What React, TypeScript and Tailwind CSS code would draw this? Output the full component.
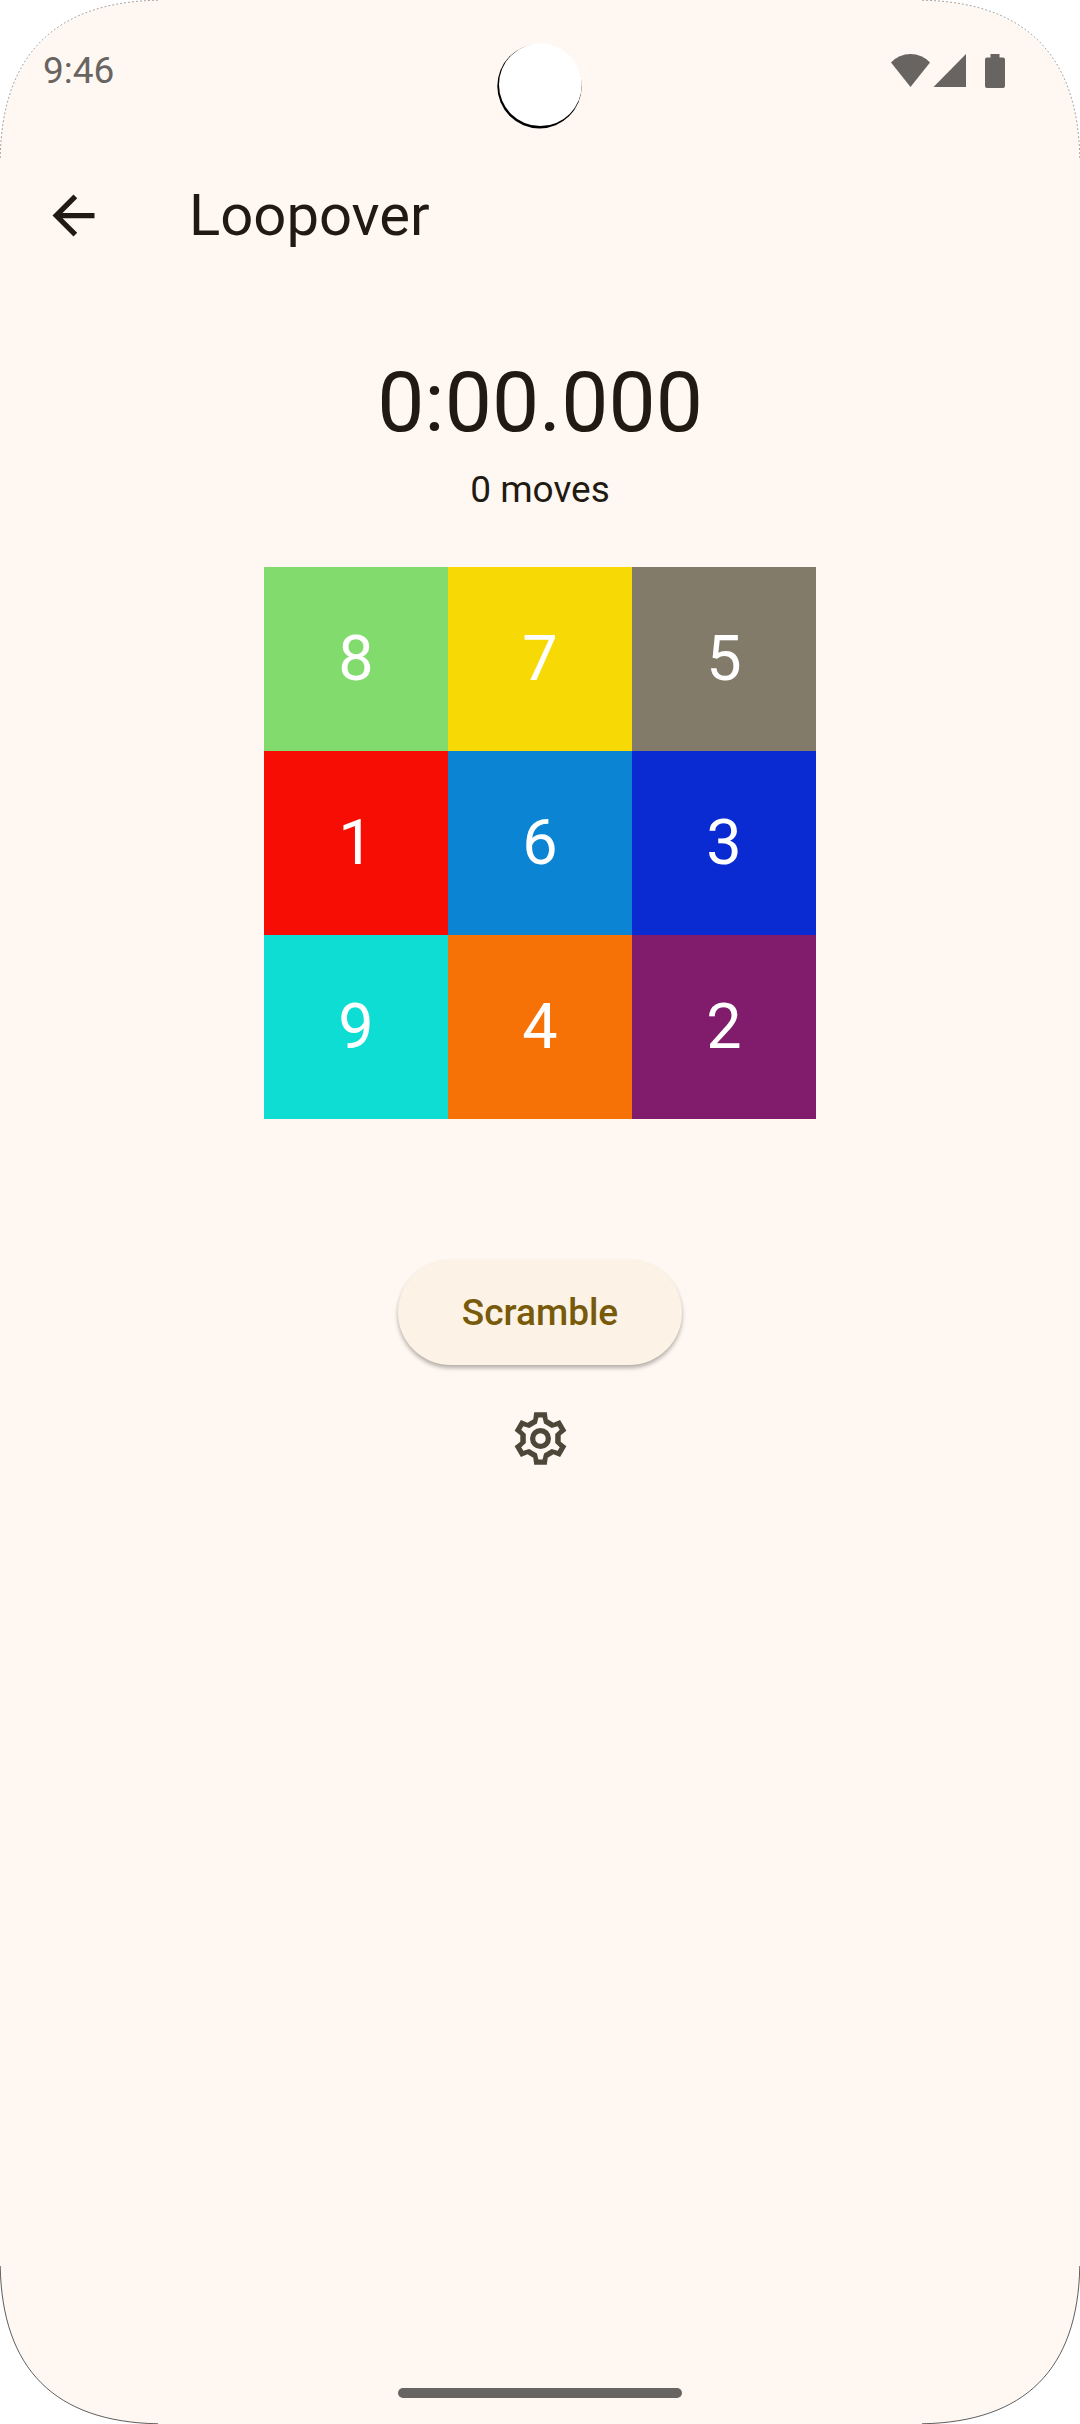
import { MdArrowBack } from "react-icons/md";

const tiles = [
  { n: 8, color: "bg-[#81db6d]" },
  { n: 7, color: "bg-[#f7d906]" },
  { n: 5, color: "bg-[#827b69]" },
  { n: 1, color: "bg-[#f80d05]" },
  { n: 6, color: "bg-[#0b85d3]" },
  { n: 3, color: "bg-[#0a2bd2]" },
  { n: 9, color: "bg-[#0eddd3]" },
  { n: 4, color: "bg-[#f77206]" },
  { n: 2, color: "bg-[#811b6b]" },
];

function Corner({ className, dark }: { className: string; dark?: boolean }) {
  return (
    <svg className={`pointer-events-none absolute size-[165px] ${className}`} viewBox="0 0 165 165" aria-hidden="true">
      <path d="M0 0H165C57 0 0 57 0 165Z" fill="#fff" />
      <path
        d="M158 0.200C55 2 2 55 0.200 158"
        fill="none"
        stroke="#000"
        strokeWidth={dark ? 0.8 : 0.6}
        strokeOpacity={dark ? 0.8 : 0.6}
        strokeDasharray={dark ? undefined : "2 2"}
      />
    </svg>
  );
}

function StatusBar() {
  return (
    <div className="flex h-[140px] items-start justify-between pt-[49px] pr-[75px] pl-[43px] text-[#686461]">
      <span className="text-[37px] leading-[44px]">9:46</span>
      <svg className="mt-[3px] h-[38px] w-[114px]" viewBox="0 0 114 38" fill="currentColor" aria-hidden="true">
        <path d="M0 10.5Q8 2 19.5 2T39 10.5L19.5 35Z" />
        <path d="M42.5 35L75 2V35Z" />
        <path d="M99.5 2h9v3.500h3.500q2 0 2 2V34q0 2-2 2H96q-2 0-2-2V7.500q0-2 2-2h3.500z" />
      </svg>
    </div>
  );
}

function Camera() {
  return (
    <svg className="absolute top-[42px] left-1/2 size-[88px] -translate-x-1/2" viewBox="0 0 88 88" aria-hidden="true">
      <circle cx="43.5" cy="44.2" r="42.2" fill="#000" />
      <circle cx="44.4" cy="42.7" r="41.4" fill="#fff" />
    </svg>
  );
}

function GearIcon() {
  return (
    <svg className="size-[63px]" viewBox="-12 -12 24 24" fill="currentColor" fillRule="evenodd" aria-hidden="true">
      <path
        d="M-2.75-7.3L-2.4-10H2.4L2.75-7.3L4.95-6.03L7.46-7.08L9.86-2.92L7.7-1.27V1.27L9.86 2.92L7.46 7.08L4.95 6.03L2.75 7.3L2.4 10H-2.4L-2.75 7.3L-4.95 6.03L-7.46 7.08L-9.86 2.92L-7.7 1.27V-1.27L-9.86-2.92L-7.46-7.08L-4.95-6.03Z
        M-1.35-5.7L-.8-8H.8L1.35-5.7L4.26-4.02L6.53-4.69L7.33-3.31L5.61-1.68V1.68L7.33 3.31L6.53 4.69L4.26 4.02L1.35 5.7L.8 8H-.8L-1.35 5.7L-4.26 4.02L-6.53 4.69L-7.33 3.31L-5.61 1.68V-1.68L-7.33-3.31L-6.53-4.69L-4.26-4.02Z"
      />
      <circle r="3" fill="none" stroke="currentColor" strokeWidth="2" />
    </svg>
  );
}

export default function App() {
  return (
    <div className="relative flex min-h-screen flex-col bg-[#fff7f1] font-['Roboto',sans-serif] text-[#1f1b13]">
      <StatusBar />
      <Camera />

      <header className="flex h-[150px] items-center gap-[84px] px-[42px]">
        <button type="button" aria-label="Back" className="size-[63px]">
          <MdArrowBack className="size-[63px]" />
        </button>
        <h1 className="text-[58px] leading-[74px]">Loopover</h1>
      </header>

      <main className="flex flex-1 flex-col items-center pt-[63px]">
        <div className="text-[84px] leading-[100px]">0:00.000</div>
        <p className="mt-[11px] text-[37px] leading-[52px]">0 moves</p>

        <div className="mt-[51px] grid grid-cols-3">
          {tiles.map(({ n, color }) => (
            <div key={n} className={`flex size-[184px] items-center justify-center text-[63px] text-white ${color}`}>
              {n}
            </div>
          ))}
        </div>

        <button
          type="button"
          className="mt-[141px] h-[105px] rounded-full bg-[#fcf2e5] px-16 text-[37px] leading-[52px] font-medium text-[#785a0b] shadow-[0_3px_4px_rgba(0,0,0,0.3)]"
        >
          Scramble
        </button>
        <button type="button" aria-label="Settings" className="mt-[42px] text-[#4d4639]">
          <GearIcon />
        </button>
      </main>

      <div className="mx-auto mb-[26px] h-[10px] w-[284px] rounded-full bg-[#686461]" />

      <Corner className="top-0 left-0" />
      <Corner className="top-0 right-0 -scale-x-100" />
      <Corner className="bottom-0 left-0 -scale-y-100" dark />
      <Corner className="right-0 bottom-0 -scale-100" dark />
    </div>
  );
}
